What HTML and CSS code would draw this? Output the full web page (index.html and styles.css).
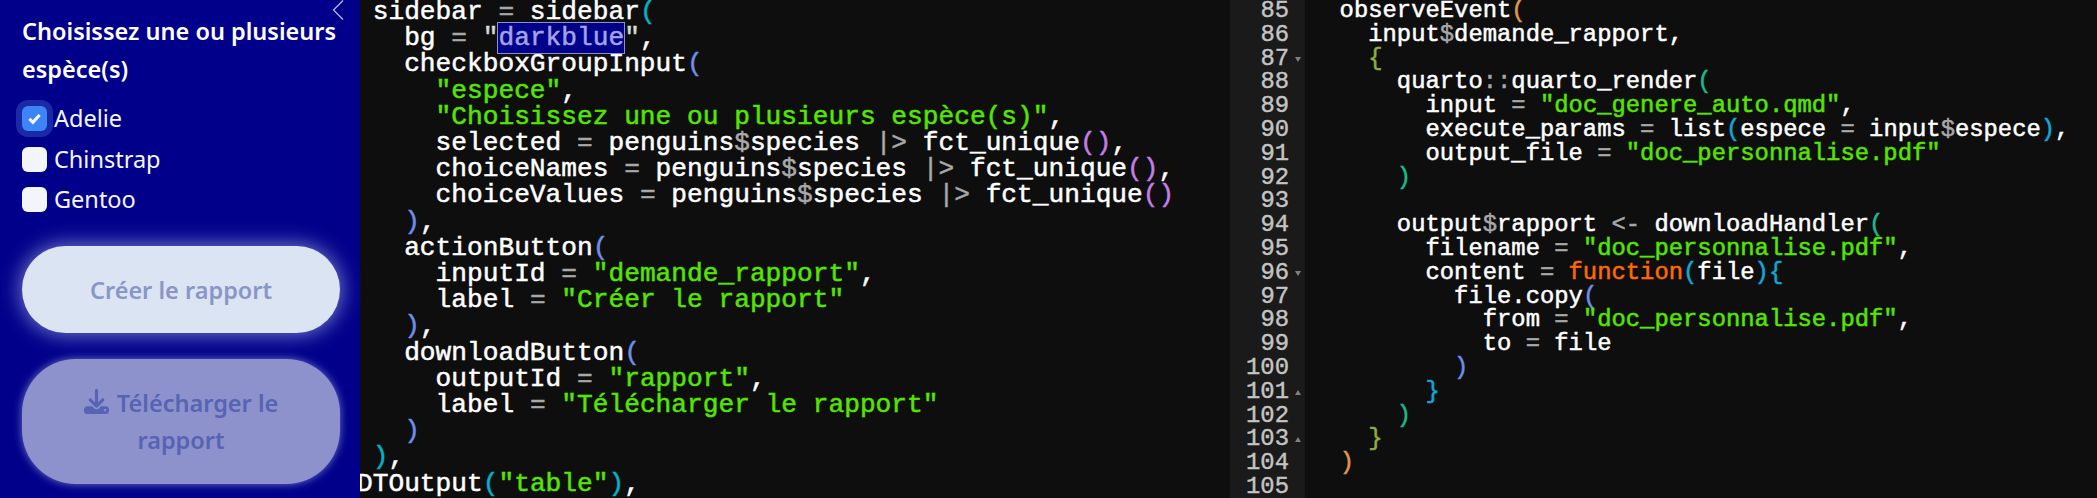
FILE: index.html
```html
<!DOCTYPE html>
<html lang="fr">
<head>
<meta charset="utf-8">
<title>Sidebar et serveur</title>
<link rel="stylesheet" href="styles.css">
</head>
<body>
<div class="screen">
  <aside class="sidebar">
    <svg class="collapse" viewBox="0 0 12 21" aria-hidden="true"><path d="M11 0.5 1.5 10 11 19.5"/></svg>
    <div class="group-label">Choisissez une ou plusieurs espèce(s)</div>
    <div class="checks">
      <label class="check"><span class="box box-on"><svg viewBox="0 0 16 16" aria-hidden="true"><path d="M3.2 8.4 6.5 11.6 12.8 4.8"/></svg></span>Adelie</label>
      <label class="check"><span class="box"></span>Chinstrap</label>
      <label class="check"><span class="box"></span>Gentoo</label>
    </div>
    <div class="btn btn-create">Créer le rapport</div>
    <div class="btn btn-download"><span><svg class="dl" viewBox="0 0 512 512" aria-hidden="true"><path d="M288 32c0-17.7-14.3-32-32-32s-32 14.3-32 32V274.7l-73.400-73.400c-12.500-12.500-32.800-12.500-45.300 0s-12.500 32.800 0 45.300l128 128c12.500 12.500 32.800 12.500 45.300 0l128-128c12.500-12.500 12.500-32.800 0-45.300s-32.800-12.500-45.300 0L288 274.700V32zM64 352c-35.300 0-64 28.700-64 64v32c0 35.300 28.700 64 64 64H448c35.300 0 64-28.700 64-64V416c0-35.300-28.700-64-64-64H346.500l-45.300 45.300c-25 25-65.500 25-90.500 0L165.500 352H64zm368 56a24 24 0 1 1 0 48 24 24 0 1 1 0-48z"/></svg> Télécharger le rapport</span></div>
  </aside>

  <section class="editor-left">
    <div class="code code-left">
      <div class="ln"> sidebar <i class="o">=</i> sidebar<i class="cy">(</i></div>
      <div class="ln">   bg <i class="o">=</i> <i class="q">"</i><mark class="sel">darkblue</mark><i class="q">"</i>,</div>
      <div class="ln">   checkboxGroupInput<i class="pb">(</i></div>
      <div class="ln">     <i class="s">"espece"</i>,</div>
      <div class="ln">     <i class="s">"Choisissez une ou plusieurs espèce(s)"</i>,</div>
      <div class="ln">     selected <i class="o">=</i> penguins<i class="o">$</i>species <i class="o">|&gt;</i> fct_unique<i class="pu">()</i>,</div>
      <div class="ln">     choiceNames <i class="o">=</i> penguins<i class="o">$</i>species <i class="o">|&gt;</i> fct_unique<i class="pu">()</i>,</div>
      <div class="ln">     choiceValues <i class="o">=</i> penguins<i class="o">$</i>species <i class="o">|&gt;</i> fct_unique<i class="pu">()</i></div>
      <div class="ln">   <i class="pb">)</i>,</div>
      <div class="ln">   actionButton<i class="pb">(</i></div>
      <div class="ln">     inputId <i class="o">=</i> <i class="s">"demande_rapport"</i>,</div>
      <div class="ln">     label <i class="o">=</i> <i class="s">"Créer le rapport"</i></div>
      <div class="ln">   <i class="pb">)</i>,</div>
      <div class="ln">   downloadButton<i class="pb">(</i></div>
      <div class="ln">     outputId <i class="o">=</i> <i class="s">"rapport"</i>,</div>
      <div class="ln">     label <i class="o">=</i> <i class="s">"Télécharger le rapport"</i></div>
      <div class="ln">   <i class="pb">)</i></div>
      <div class="ln"> <i class="cy">)</i>,</div>
      <div class="ln">DTOutput<i class="cy">(</i><i class="s">"table"</i><i class="cy">)</i>,</div>
    </div>
  </section>

  <section class="editor-right">
    <div class="gutter">
      <div class="num">85</div>
      <div class="num">86</div>
      <div class="num fold-down">87</div>
      <div class="num">88</div>
      <div class="num">89</div>
      <div class="num">90</div>
      <div class="num">91</div>
      <div class="num">92</div>
      <div class="num">93</div>
      <div class="num">94</div>
      <div class="num">95</div>
      <div class="num fold-down">96</div>
      <div class="num">97</div>
      <div class="num">98</div>
      <div class="num">99</div>
      <div class="num">100</div>
      <div class="num fold-up">101</div>
      <div class="num">102</div>
      <div class="num fold-up">103</div>
      <div class="num">104</div>
      <div class="num">105</div>
    </div>
    <div class="code code-right">
      <div class="ln">  observeEvent<i class="or">(</i></div>
      <div class="ln">    input<i class="o">$</i>demande_rapport,</div>
      <div class="ln">    <i class="ol">{</i></div>
      <div class="ln">      quarto<i class="o">::</i>quarto_render<i class="te">(</i></div>
      <div class="ln">        input <i class="o">=</i> <i class="s">"doc_genere_auto.qmd"</i>,</div>
      <div class="ln">        execute_params <i class="o">=</i> list<i class="bl">(</i>espece <i class="o">=</i> input<i class="o">$</i>espece<i class="bl">)</i>,</div>
      <div class="ln">        output_file <i class="o">=</i> <i class="s">"doc_personnalise.pdf"</i></div>
      <div class="ln">      <i class="te">)</i></div>
      <div class="ln">&nbsp;</div>
      <div class="ln">      output<i class="o">$</i>rapport <i class="o">&lt;-</i> downloadHandler<i class="te">(</i></div>
      <div class="ln">        filename <i class="o">=</i> <i class="s">"doc_personnalise.pdf"</i>,</div>
      <div class="ln">        content <i class="o">=</i> <i class="kw">function</i><i class="bl">(</i>file<i class="bl">){</i></div>
      <div class="ln">          file.copy<i class="pb">(</i></div>
      <div class="ln">            from <i class="o">=</i> <i class="s">"doc_personnalise.pdf"</i>,</div>
      <div class="ln">            to <i class="o">=</i> file</div>
      <div class="ln">          <i class="pb">)</i></div>
      <div class="ln">        <i class="bl">}</i></div>
      <div class="ln">      <i class="te">)</i></div>
      <div class="ln">    <i class="ol">}</i></div>
      <div class="ln">  <i class="or">)</i></div>
      <div class="ln">&nbsp;</div>
    </div>
  </section>
</div>
</body>
</html>
```

FILE: styles.css
```css
* { box-sizing: border-box; }

html, body {
  margin: 0;
  padding: 0;
  background: #0e0e0e;
}

.screen {
  display: flex;
  width: 2097px;
  height: 498px;
  overflow: hidden;
}

/* Sidebar */
.sidebar {
  position: relative;
  flex: 0 0 360px;
  display: flex;
  flex-direction: column;
  padding: 12px 20px 0 22px;
  background: #00008b;
  color: #f4f6fb;
  font-family: "Noto Sans", Lato, sans-serif;
  font-size: 23.500px;
}

.collapse {
  position: absolute;
  top: 0;
  left: 332px;
  width: 12px;
  height: 21px;
  fill: none;
  stroke: #b9bde6;
  stroke-width: 1.2;
}

.group-label {
  font-weight: 600;
  line-height: 38px;
  color: #fff;
}

.checks {
  display: flex;
  flex-direction: column;
  gap: 15.500px;
  margin-top: 18px;
}

.check {
  display: flex;
  align-items: center;
  gap: 7px;
  height: 25px;
  line-height: 25px;
}

.box {
  flex: 0 0 25px;
  height: 25px;
  border-radius: 6px;
  background: #f2f5fa;
}

.box-on {
  display: flex;
  align-items: center;
  justify-content: center;
  background: #3d85f7;
  box-shadow: 0 0 0 6px #1a2aa6;
}

.box-on svg {
  width: 17px;
  height: 17px;
  fill: none;
  stroke: #fff;
  stroke-width: 2.800;
}

.btn {
  display: flex;
  align-items: center;
  justify-content: center;
  text-align: center;
  font-weight: 600;
}

.btn-create {
  height: 87px;
  margin-top: 34px;
  border-radius: 44px;
  background: #dbe4f2;
  color: #8a96c6;
  box-shadow: 0 0 20px 2px rgba(190, 200, 240, 0.6);
}

.btn-download {
  height: 125px;
  margin-top: 26px;
  padding: 0 30px;
  border-radius: 54px;
  background: #8d92cc;
  color: #5763b3;
  line-height: 37px;
  box-shadow: 0 0 9px 0 rgba(190, 196, 235, 0.6);
}

.dl {
  width: 25px;
  height: 25px;
  margin-right: 2px;
  vertical-align: -2px;
  fill: #5763b3;
}

/* Code */
.editor-left {
  flex: 0 0 870px;
  overflow: hidden;
  background: #0e0e0e;
}

.editor-right {
  flex: 1;
  display: flex;
  overflow: hidden;
  background: #0e0e0e;
}

.code {
  font-family: "Liberation Mono", "DejaVu Sans Mono", monospace;
  color: #fff;
  -webkit-text-stroke: 0.5px currentColor;
}

.code i { font-style: normal; }

.ln { white-space: pre; }

.code-left {
  margin: -1px 0 0 -3px;
  font-size: 26.200px;
  line-height: 26.200px;
}

.code-right {
  margin: -1px 0 0 6px;
  font-size: 23.850px;
  line-height: 23.800px;
}

.gutter {
  flex: 0 0 75px;
  height: 498px;
  background: #1a1a1a;
  color: #c4c4c4;
  font-family: "Liberation Mono", "DejaVu Sans Mono", monospace;
  font-size: 23.850px;
  line-height: 23.800px;
  text-align: right;
  overflow: hidden;
  -webkit-text-stroke: 0.4px currentColor;
}

.num {
  position: relative;
  top: -1px;
  padding-right: 16px;
}

.fold-down::after,
.fold-up::after {
  content: "";
  position: absolute;
  right: 4px;
  top: 10px;
  border-left: 3.500px solid transparent;
  border-right: 3.500px solid transparent;
  -webkit-text-stroke: 0;
}

.fold-down::after { border-top: 5px solid #808080; }
.fold-up::after { border-bottom: 5px solid #808080; }

.o { color: #a8a8a8; }
.q { color: #d8d8d8; }
.s { color: #55e600; }
.kw { color: #ff6a00; }
.cy { color: #00b4c8; }
.pb { color: #6f8fe8; }
.pu { color: #c47fe6; }
.or { color: #e0994f; }
.ol { color: #8fae3e; }
.te { color: #1fb98c; }
.bl { color: #0ea9d6; }

.sel {
  background: #00008b;
  color: #a3a3e6;
  outline: 1px solid #9090c8;
}
```
